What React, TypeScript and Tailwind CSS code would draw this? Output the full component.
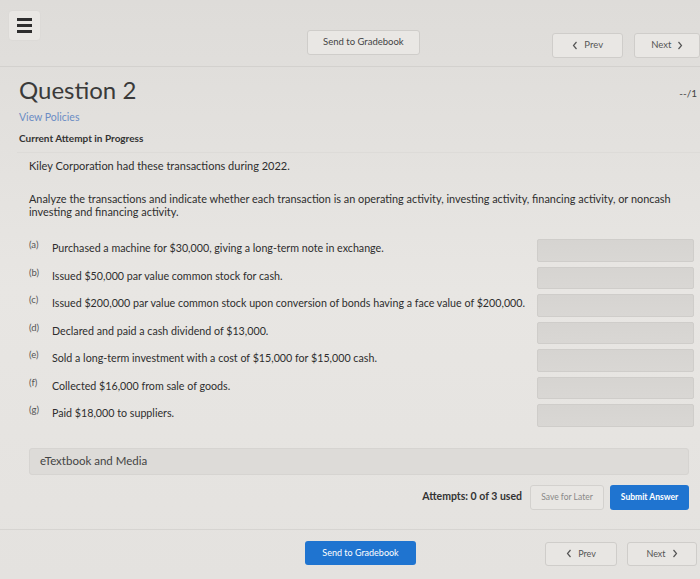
import React from "react";

const items: [string, string][] = [
  ["(a)", "Purchased a machine for $30,000, giving a long-term note in exchange."],
  ["(b)", "Issued $50,000 par value common stock for cash."],
  ["(c)", "Issued $200,000 par value common stock upon conversion of bonds having a face value of $200,000."],
  ["(d)", "Declared and paid a cash dividend of $13,000."],
  ["(e)", "Sold a long-term investment with a cost of $15,000 for $15,000 cash."],
  ["(f)", "Collected $16,000 from sale of goods."],
  ["(g)", "Paid $18,000 to suppliers."],
];

function Chevron({ dir }: { dir: "l" | "r" }) {
  return (
    <svg width="6" height="9" viewBox="0 0 6 9" className="inline-block">
      <path
        d={dir === "l" ? "M4.5 1 L1.5 4.5 L4.5 8" : "M1.5 1 L4.5 4.5 L1.5 8"}
        fill="none"
        stroke="currentColor"
        strokeWidth="1.2"
      />
    </svg>
  );
}

export default function App() {
  return (
    <div className="w-[700px] h-[579px] overflow-hidden bg-gradient-to-b from-[#dedcd9] via-[#e8e6e3] to-[#e4e2df] font-['Lato',_sans-serif] text-[#2e2e2e]">
      {/* header */}
      <div className="flex h-[67px] border-b border-[#d3d1ce] items-start">
        <div className="ml-[8px] mt-[10px] w-[33px] h-[31px] rounded-sm border border-[#dcdad7] bg-[#e9e7e4] flex flex-col items-center justify-center gap-[3.5px]">
          <div className="w-[15px] h-[2.5px] bg-[#2e2e2e]" />
          <div className="w-[15px] h-[2.5px] bg-[#2e2e2e]" />
          <div className="w-[15px] h-[2.5px] bg-[#2e2e2e]" />
        </div>
        <button className="ml-[266px] mt-[30px] w-[114px] h-[25px] rounded-[3px] border border-[#cfcdca] bg-[#e9e7e4] text-[9.5px] text-[#444]">
          Send to Gradebook
        </button>
        <button className="ml-[132px] mt-[33px] w-[72px] h-[25px] rounded-[3px] border border-[#cfcdca] bg-[#e9e7e4] text-[9.5px] text-[#555] flex items-center justify-center gap-[6px]">
          <Chevron dir="l" /> Prev
        </button>
        <button className="ml-[11px] mt-[33px] w-[66px] h-[25px] rounded-[3px] border border-[#cfcdca] bg-[#e9e7e4] text-[9.5px] text-[#555] flex items-center justify-center gap-[6px]">
          Next <Chevron dir="r" />
        </button>
      </div>

      {/* title */}
      <div className="flex items-start justify-between pl-[19px] pr-[3px] pt-[9px]">
        <div className="text-[24px] leading-[28px] text-[#3a3a3a]">Question 2</div>
        <div className="mt-[10px] text-[10px] text-[#444]">--/1</div>
      </div>
      <div className="pl-[19px] mt-[6px] text-[10.5px] text-[#6b8cc4] leading-[14px]">View Policies</div>
      <div className="pl-[19px] mt-[7px] text-[10px] font-bold text-[#333] leading-[14px]">Current Attempt in Progress</div>

      {/* content panel */}
      <div className="ml-[17px] mt-[7px] border-t border-[#dddbd8] pl-[12px] pr-[6px]">
        <div className="mt-[6px] text-[11px] leading-[14px]">Kiley Corporation had these transactions during 2022.</div>
        <div className="mt-[19px] text-[10.9px] leading-[13px] w-[650px]">
          Analyze the transactions and indicate whether each transaction is an operating activity, investing activity, financing activity, or noncash investing and financing activity.
        </div>

        <div className="mt-[21px] flex flex-col gap-[5px]">
          {items.map(([l, t]) => (
            <div key={l} className="flex items-center h-[22.5px]">
              <div className="w-[23px] text-[9.5px] text-[#555] self-start mt-[-1px]">{l}</div>
              <div className="w-[485px] text-[10.7px] leading-[14px] -mt-[4px]">{t}</div>
              <div className="w-[157px] h-[22.5px] rounded-[2px] border border-[#cfcdca] bg-gradient-to-b from-[#d6d4d1] to-[#d9d7d4]" />
            </div>
          ))}
        </div>

        <div className="mt-[21px] w-[660px] h-[27px] rounded-[3px] bg-[#dddbd8] border border-[#d6d4d1] flex items-center pl-[10px] text-[11.5px] text-[#444]">
          eTextbook and Media
        </div>

        <div className="mt-[10px] flex items-center justify-end w-[660px]">
          <div className="text-[10.5px] font-bold text-[#333] mr-[8px]">Attempts: 0 of 3 used</div>
          <button className="w-[74px] h-[25px] rounded-[3px] border border-[#d3d1ce] bg-[#e8e6e3] text-[8.5px] text-[#888] mr-[6px]">
            Save for Later
          </button>
          <button className="w-[79px] h-[25px] rounded-[3px] bg-[#1f74d0] text-[8.5px] font-bold text-white">
            Submit Answer
          </button>
        </div>
      </div>

      {/* bottom */}
      <div className="mt-[19px] border-t border-[#d6d4d1] flex items-start pt-[11px]">
        <button className="ml-[305px] w-[111px] h-[24px] rounded-[3px] bg-[#1f74d0] text-[9px] text-white">
          Send to Gradebook
        </button>
        <button className="ml-[129px] mt-[1px] w-[72px] h-[24px] rounded-[3px] border border-[#cfcdca] bg-[#e8e6e3] text-[9px] text-[#555] flex items-center justify-center gap-[6px]">
          <Chevron dir="l" /> Prev
        </button>
        <button className="ml-[10px] mt-[1px] w-[70px] h-[24px] rounded-[3px] border border-[#cfcdca] bg-[#e8e6e3] text-[9px] text-[#555] flex items-center justify-center gap-[6px]">
          Next <Chevron dir="r" />
        </button>
      </div>
    </div>
  );
}
